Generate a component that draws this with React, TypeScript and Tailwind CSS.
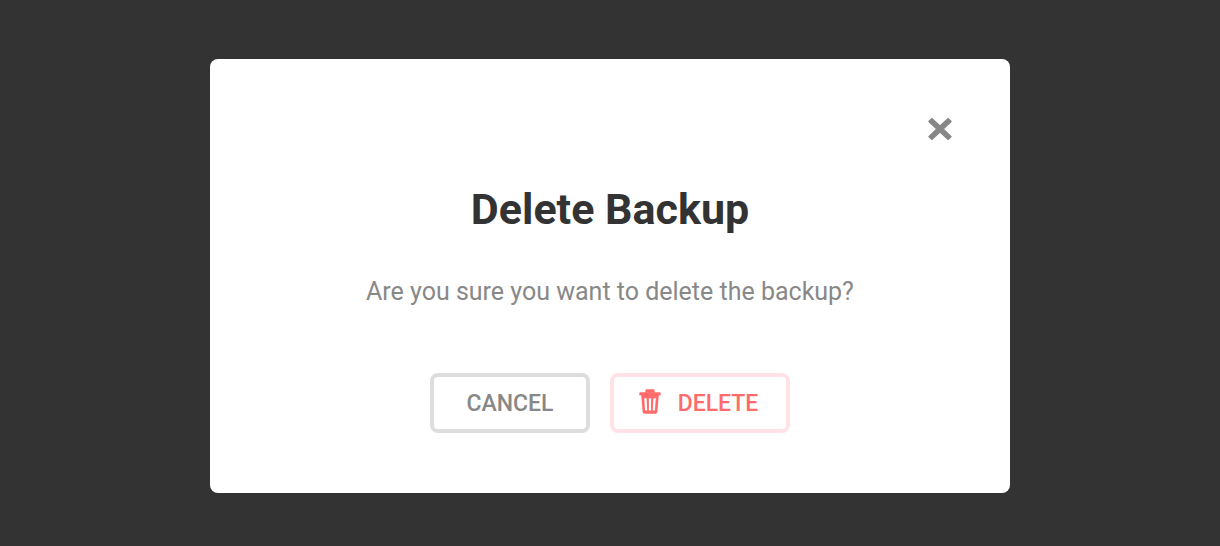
export default function App() {
  return (
    <div className="flex min-h-screen items-start justify-center bg-[#333333] px-4 pt-[59px] pb-[53px] font-['Roboto',sans-serif]">
      <section
        role="dialog"
        aria-modal="true"
        aria-labelledby="dialog-title"
        className="flex w-full max-w-[800px] flex-col items-center rounded-lg bg-white px-[54px] pt-[54px] pb-[60px]"
      >
        <button type="button" aria-label="Close" className="flex size-8 items-center justify-center self-end text-[#888888]">
          <svg viewBox="0 0 24 24" className="size-6" fill="currentColor" stroke="currentColor" strokeWidth="2" strokeLinejoin="round" aria-hidden="true">
            <path d="M3.9 1.9 12 9.4 20.1 1.9 22.7 4.4 14.7 12 22.7 19.6 20.1 22.1 12 14.6 3.9 22.1 1.3 19.6 9.3 12 1.3 4.4z" />
          </svg>
        </button>
        <h1 id="dialog-title" className="mt-[38px] text-[43px] leading-[52px] font-bold text-[#333333]">Delete Backup</h1>
        <p className="mt-[41px] text-[25px] leading-8 text-[#888888]">Are you sure you want to delete the backup?</p>
        <div className="mt-[65px] flex gap-5">
          <button type="button" className="h-[60px] w-40 rounded-lg border-4 border-[#dddddd] pt-0.5 text-[23px] font-medium text-[#888888]">CANCEL</button>
          <button type="button" className="flex h-[60px] w-[180px] items-center justify-center gap-[17px] rounded-lg border-4 border-[#ffe2e8] pt-0.5 pr-[3px] text-[23px] font-medium text-[#ff6b6b]">
            <svg viewBox="0 0 22 30" className="h-[30px] w-[22px]" fill="currentColor" aria-hidden="true">
              <path d="M7.4 .3h7.2a1 1 0 0 1 1 1v2.5H6.4V1.3a1 1 0 0 1 1-1z" />
              <path d="M1.4 3.2h19.2a1.1 1.1 0 0 1 1.1 1.1v1.9H.3V4.3a1.1 1.1 0 0 1 1.1-1.1z" />
              <path fillRule="evenodd" d="M2.2 6h17.6l-1.4 16.9a2 2 0 0 1-2 1.8H5.6a2 2 0 0 1-2-1.8zM5.2 9.2l.9 12.4h2.1l-.6-12.4zM9.9 9.2v12.4h2.2V9.2zM14.4 9.2l-.6 12.4h2.1l.9-12.4z" />
            </svg>
            DELETE
          </button>
        </div>
      </section>
    </div>
  );
}
